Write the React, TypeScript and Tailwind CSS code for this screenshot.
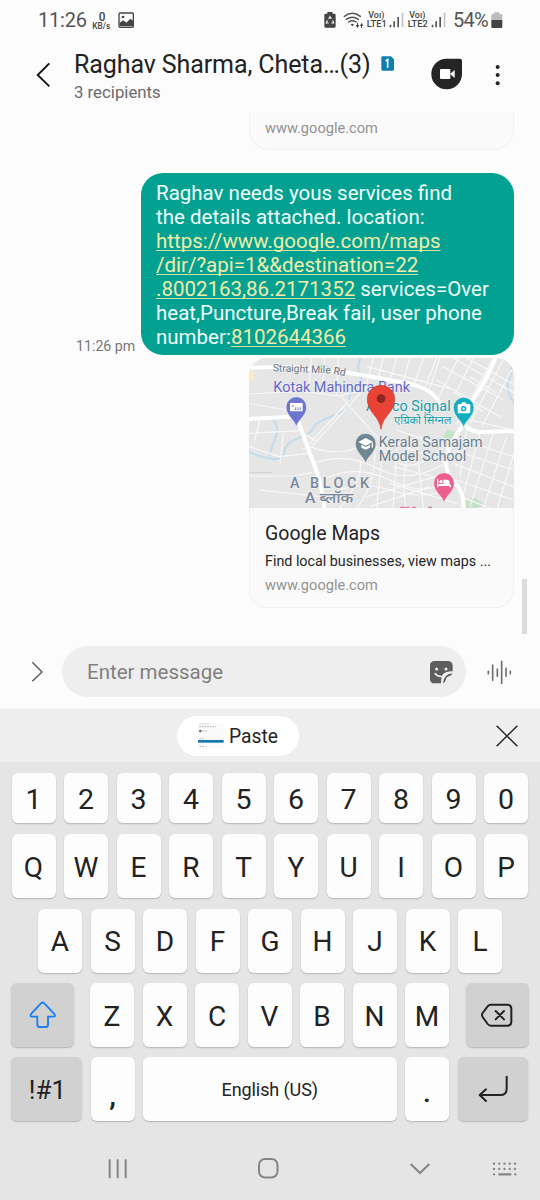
import React from "react";

function BatterySaverIcon() {
  return (
    <svg className="h-4 w-3 shrink-0" viewBox="161 34 36 48">
      <path d="M171 34h16v5h5q4 0 4 4v34q0 4-4 4h-26q-4 0-4-4V43q0-4 4-4h5z" fill="#444" />
      <path d="M175 55l4-7 4 7M187 59l3 8h-7M175 67h-7l3-8" fill="none" stroke="#fcfcfc" strokeWidth="3.4" />
    </svg>
  );
}

function WifiIcon() {
  return (
    <svg className="h-[17px] w-[21px] shrink-0" viewBox="219 32 63 51">
      <g fill="none" stroke="#555" strokeWidth="4.500" strokeLinecap="round">
        <path d="M223 45q24-18 48 0M229 54q18-13 36 0M236 62q11-8 22 0" />
      </g>
      <path d="M242 69q5-4 10 0l-5 6zM257 71h4v-6h3v6h4l-5.500 9zM270 73h3v7h3v-7h4l-5.500-9z" fill="#444" />
    </svg>
  );
}

function Lte({ n }: { n: string }) {
  return (
    <svg className="h-[18px] w-[21px] shrink-0" viewBox="289 32 63 54">
      <g fill="#444" fontFamily="Roboto" fontWeight="500">
        <text x="296" y="53" fontSize="27" textLength="48" lengthAdjust="spacingAndGlyphs">Voı)</text>
        <text x="291" y="81" fontSize="28" textLength="60" lengthAdjust="spacingAndGlyphs">{"LTE" + n}</text>
      </g>
    </svg>
  );
}

function Signal() {
  return (
    <svg className="h-4 w-[15px] shrink-0" viewBox="359 35 45 48">
      <path d="M361 73h5v8h-5zM372 63h5v18h-5zM384 50h5v31h-5z" fill="#555" />
      <path d="M397 37h5v44h-5z" fill="#c4c4c4" />
    </svg>
  );
}

function StatusBar() {
  return (
    <div className="flex h-10 items-center">
      <span className="ml-[38px] w-[51px] whitespace-nowrap text-[20px] leading-6 tracking-[-0.200px] text-[#555]">11:26</span>
      <svg className="ml-[3px] h-[21px] w-5 shrink-0" viewBox="277 30 60 63">
        <g fill="#444" fontFamily="Roboto" fontWeight="500">
          <text x="297" y="62" fontSize="38" textLength="20" lengthAdjust="spacingAndGlyphs">0</text>
          <text x="278" y="87" fontSize="25" textLength="54" lengthAdjust="spacingAndGlyphs">KB/s</text>
        </g>
      </svg>
      <svg className="ml-[6px] h-4 w-4 shrink-0" viewBox="353 35 48 48">
        <rect x="356" y="38" width="43" height="43" rx="3" fill="#fcfcfc" stroke="#444" strokeWidth="4" />
        <path d="M358 67l11-7 9 7 12-12 9 7v16H358z" fill="#444" />
        <circle cx="368" cy="50" r="4" fill="#444" />
      </svg>
      <div className="ml-[190px] flex items-center">
        <BatterySaverIcon />
        <div className="w-[7px]" />
        <WifiIcon />
        <div className="w-[2px]" />
        <Lte n="1" />
        <div className="w-[2px]" />
        <Signal />
        <div className="w-[3px]" />
        <Lte n="2" />
        <div className="w-[3px]" />
        <Signal />
      </div>
      <span className="ml-[7px] w-[38px] whitespace-nowrap text-[20px] leading-6 tracking-[-0.700px] text-[#555]">54%</span>
      <svg className="h-[17px] w-3 shrink-0" viewBox="663 33 36 51">
        <path d="M672 34h16v5h6q3 0 3 3v15h-33V42q0-3 3-3h5z" fill="#bdbdbd" />
        <path d="M664 57h33v21q0 3-3 3h-27q-3 0-3-3z" fill="#444" />
      </svg>
    </div>
  );
}

function Header() {
  return (
    <div className="flex h-[72px] items-start">
      <svg className="ml-[36px] mt-[21px] h-[28px] w-4 shrink-0" viewBox="108 183 48 84">
        <path d="M148 190L113 225l35 34" fill="none" stroke="#111" strokeWidth="5.500" />
      </svg>
      <div className="ml-[22px] mt-[10px] w-[300px]">
        <div className="whitespace-nowrap text-[25px] leading-[30px] tracking-[-0.100px] text-[#222]">Raghav Sharma, Cheta…(3)</div>
        <div className="mt-[2px] whitespace-nowrap text-[16.800px] leading-5 text-[#6b6b6b]">3 recipients</div>
      </div>
      <svg className="ml-[7px] mt-4 h-[15px] w-[13px] shrink-0" viewBox="333 168 39 45">
        <path d="M338 169h25l9 9v30q0 4-4 4h-30q-4 0-4-4v-35q0-4 4-4z" fill="#0d7fae" />
        <path d="M347 183l6-4v24" fill="none" stroke="#fff" strokeWidth="5" />
      </svg>
      <svg className="ml-[37px] mt-[18px] h-8 w-8 shrink-0" viewBox="484 175 96 96">
        <path d="M531 177h40q6 0 6 6v41a46 46 0 1 1-46-47z" fill="#252525" />
        <rect x="511" y="208" width="31" height="30" rx="3" fill="#fff" />
        <path d="M541 223l14-12v24z" fill="#fff" />
      </svg>
      <svg className="ml-[29px] mt-[23px] h-6 w-3 shrink-0" viewBox="666 188 36 72">
        <circle cx="683" cy="200" r="6" fill="#222" />
        <circle cx="683" cy="224" r="6" fill="#222" />
        <circle cx="683" cy="249" r="6" fill="#222" />
      </svg>
    </div>
  );
}

function Pin({ x, y, color, children }: { x: number; y: number; color: string; children: React.ReactNode }) {
  return (
    <g transform={`translate(${x} ${y})`}>
      <path d="M0 60C-5 38-31 27-31 0a31 31 0 0 1 62 0C31 27 5 38 0 60z" fill={color} stroke="#f5f5f5" strokeWidth="2" />
      {children}
    </g>
  );
}

function MapPicture() {
  return (
    <svg className="h-[150px] w-full" viewBox="27 24 795 450" preserveAspectRatio="none">
      <rect x="27" y="24" width="795" height="450" fill="#e6e6e6" />
      <path d="M610 262l12-24 22 8 8 26zM672 448l34-4 30 22-30 8h-34z" fill="#c3e3c6" />
      <path d="M27 66h14v26H27z" fill="#f6ecc0" />
      <g fill="none" stroke="#c6dbe9" strokeWidth="6">
        <path d="M362 24q-14 30-2 52 12 18-12 36t-20 42-50 44-58 36-44 30-44 44-60 14-45-22" />
        <path d="M100 208q18 26 8 50t-20 62M808 24q14 36 0 62t8 64 6 40" />
      </g>
      <g fill="none" stroke="#f8f8f8" strokeWidth="3.500">
        <path d="M27 132l160-8 110 14 90-22M215 24l-8 80M255 24l-10 108M295 24l-5 110M27 160l110 20M400 24l-24 90 90 30M430 24l-16 60M470 24l-20 70M510 24l-24 80M550 24l-30 86M590 24l-32 80M380 50l250 66M390 76l150 34M360 130L215 290M330 150L190 300M300 136l160 180M27 250l150-8 50 30M27 290l90 30 90-10M60 210l-16 60M130 250l-10 90" />
        <path d="M610 50l180 100M590 90l190 110M640 24l182 104M680 24l142 80M600 24l-30 90M655 24l-60 120M700 24l-50 100M790 30l-100 190M815 60l-90 170M760 24l-110 200M690 80l80 50M640 125l90 60M690 210l132 30" />
        <path d="M208 290q80 30 140 4t110 30 150-30M220 340q100-36 190 14t200-10M250 390q90-50 200 0t150 10M270 430q90-40 180-10t170 0M300 474q70-90 60-140M350 474q60-70 54-190M410 474l20-200M460 474l10-180M500 474q-20-60 10-200M550 474l-20-190M470 240l150 50M470 280l150 60M460 350l160 40M450 400l200 60M380 440l240-70M390 470l180-60" />
        <path d="M640 260l180 60M640 300l180 60M640 340l180 70M650 390l170 60M660 440l90 34M680 240l-20 140M720 250l-60 220M760 250l-70 220M800 260l-70 214M822 310l-50 164" />
        <path d="M27 378h130l60-10M60 420l180 20" />
      </g>
      <path d="M27 368h70" stroke="#d2d2d2" strokeWidth="3" />
      <g fill="none" stroke="#fff" strokeWidth="12">
        <path d="M27 54q140-10 280 12t220 40q70 20 80 80M27 207l142-8 70 190 15 85M767 24q-30 70-58 110t-36 84q12 30 60 28t89-2M671 222q-36 50-50 90t20 80 30 82" />
      </g>
      <g fontFamily="Roboto, 'Noto Sans', sans-serif" strokeLinejoin="round" paintOrder="stroke" stroke="#f0f0f0" strokeWidth="4">
        <text x="98" y="64" fontSize="31" fill="#6e7882" textLength="174" lengthAdjust="spacingAndGlyphs" transform="rotate(2 98 64)">Straight Mile</text>
        <text x="279" y="72" fontSize="31" fill="#6e7882" textLength="37" lengthAdjust="spacingAndGlyphs" transform="rotate(10 279 72)">Rd</text>
        <text x="100" y="126" fontSize="43" fill="#6669c8" textLength="410" lengthAdjust="spacingAndGlyphs">Kotak Mahindra Bank</text>
        <text x="378" y="184" fontSize="43" fill="#169dab" textLength="254" lengthAdjust="spacingAndGlyphs">Agrico Signal</text>
        <text x="462" y="221" fontSize="31" fill="#169dab" textLength="172" lengthAdjust="spacingAndGlyphs">एग्रिको सिग्नल</text>
        <text x="416" y="290" fontSize="43" fill="#69808f" textLength="312" lengthAdjust="spacingAndGlyphs">Kerala Samajam</text>
        <text x="416" y="334" fontSize="43" fill="#69808f" textLength="263" lengthAdjust="spacingAndGlyphs">Model School</text>
        <text x="150" y="414" fontSize="43" fontWeight="500" fill="#7b869d">A</text>
        <text x="210" y="414" fontSize="43" fontWeight="500" fill="#7b869d" textLength="177">BLOCK</text>
        <text x="194" y="460" fontSize="44" fontWeight="500" fill="#7b869d" textLength="146" lengthAdjust="spacingAndGlyphs">A ब्लॉक</text>
      </g>
      <path d="M480 472h28M516 472h12M564 472h12" stroke="#e77ba7" strokeWidth="4" />
      <Pin x={169} y={171} color="#6d75cf">
        <rect x="-19" y="-12" width="38" height="25" rx="2" fill="#fff" />
        <path d="M-14-3h7M-5 3H0M3 3h4M10 3h4M-5 7H0M3 7h4M10 7h4" stroke="#6d75cf" strokeWidth="3" />
      </Pin>
      <Pin x={671} y={173} color="#14acc0">
        <path d="M-14-11h6l4-5H5l4 5h7q4 0 4 4v20q0 4-4 4h-30q-4 0-4-4V-7q0-4 4-4z" fill="#fff" />
        <circle cy="3" r="8" fill="#14acc0" />
        <circle cy="3" r="3.500" fill="#fff" />
      </Pin>
      <Pin x={377} y={281} color="#708692">
        <path d="M0-17l22 11L0 6l-22-11zM-13 3L0 10 13 3v9L0 18l-13-6zM18-3h4V12h-4z" fill="#fff" />
      </Pin>
      <Pin x={612} y={399} color="#ed5e91">
        <path d="M-21-13h4V5h34v-7q0-8-8-8H-2V3h-13v2h36v8h-4V9h-34v4h-4z" fill="#fff" />
        <circle cx="-9" cy="-4" r="5" fill="#fff" />
      </Pin>
      <path d="M423 238c-5-42-41-50-41-91a41 41 0 0 1 82 0c0 41-36 49-41 91z" fill="#e94335" stroke="#cc3a2f" strokeWidth="2" />
      <circle cx="423" cy="146" r="13" fill="#8f251f" />
    </svg>
  );
}

function Link({ children }: { children: React.ReactNode }) {
  return (
    <span className="text-[#f2edaa] underline decoration-[#d3dc9c] decoration-1 underline-offset-2 [text-decoration-skip-ink:none]">
      {children}
    </span>
  );
}

function Messages() {
  return (
    <div className="relative flex h-[522px] flex-col items-end overflow-hidden pr-[26px]">
      <div className="flex h-[38px] w-[265px] shrink-0 rounded-b-[20px] border border-t-0 border-[#f1f1f1] bg-[#fafafa] pl-[15px] pt-[6px]">
        <span className="whitespace-nowrap text-[14.600px] leading-5 text-[#929292]">www.google.com</span>
      </div>
      <div className="mt-[23px] flex items-end">
        <span className="mb-px mr-[5px] w-[60px] whitespace-nowrap text-[14.200px] leading-4 text-[#777]">11:26 pm</span>
        <div className="h-[182px] w-[373px] whitespace-nowrap rounded-[22px] bg-[#03a191] pl-[15px] pt-2 text-[20.500px] leading-6 text-[#f0fffb]">
          <div>Raghav needs yous services find</div>
          <div>the details attached. location:</div>
          <div><Link>https://www.google.com/maps</Link></div>
          <div><Link>/dir/?api=1&amp;&amp;destination=22</Link></div>
          <div><Link>.8002163,86.2171352</Link> services=Over</div>
          <div>heat,Puncture,Break fail, user phone</div>
          <div>number:<Link>8102644366</Link></div>
        </div>
      </div>
      <div className="mt-[3px] flex h-[250px] w-[265px] shrink-0 flex-col overflow-hidden rounded-[18px] bg-[#fafafa] shadow-[inset_0_0_0_1px_#f1f1f1]">
        <MapPicture />
        <div className="flex flex-col whitespace-nowrap pl-4">
          <span className="mt-[14px] text-[19.500px] leading-6 text-[#252525]">Google Maps</span>
          <span className="mt-[5px] text-[14.300px] leading-5 text-[#252525]">Find local businesses, view maps ...</span>
          <span className="mt-[4px] text-[14.600px] leading-5 text-[#929292]">www.google.com</span>
        </div>
      </div>
      <div className="absolute right-[13px] top-[467px] h-[55px] w-[5px] bg-[#dcdcdc]" />
    </div>
  );
}

function Composer() {
  return (
    <div className="flex h-[75px] items-start pt-[12px]">
      <svg className="ml-[30px] mt-[14px] h-6 w-[14px] shrink-0" viewBox="90 90 42 72">
        <path d="M97 97l29 29-29 28" fill="none" stroke="#5f5f5f" strokeWidth="4.500" />
      </svg>
      <div className="ml-[18px] flex h-[51px] w-[404px] items-center justify-between rounded-full bg-[#eee] pl-[25px] pr-3">
        <span className="whitespace-nowrap pt-px text-[20.500px] leading-6 text-[#808080]">Enter message</span>
        <svg className="h-6 w-[25px]" viewBox="387 88 75 72">
          <path d="M404 91h39q15 0 15 15v16q-25 1-30 10-5 8-5 26h-19q-14 0-14-14v-39q0-14 14-14z" fill="#5e5e5e" />
          <path d="M429 158q1-26 28-30-1 7-8 8-10 2-12 12-1 8-8 10z" fill="#5e5e5e" />
          <circle cx="410" cy="115" r="4.500" fill="#eee" />
          <circle cx="438" cy="115" r="4.500" fill="#eee" />
          <path d="M404 128q10 12 25 9" fill="none" stroke="#eee" strokeWidth="5" />
        </svg>
      </div>
      <svg className="ml-[20px] mt-[14px] h-6 w-[27px] shrink-0" viewBox="557 88 81 72">
        <path d="M564 122v7M577 103v46M591 115v22M604 92v66M617 113v24M630 122v7" stroke="#707070" strokeWidth="5" strokeLinecap="round" />
      </svg>
    </div>
  );
}

function ClipboardBar() {
  return (
    <div className="flex h-[53px] items-center bg-[#eee]">
      <div className="ml-[177px] flex h-10 w-[122px] items-center rounded-full bg-white pl-5">
        <svg className="h-[26px] w-7 shrink-0" viewBox="591 276 84 78">
          <rect x="594" y="276" width="78" height="78" fill="#fafafa" />
          <path d="M597 279h30" stroke="#ddd" strokeWidth="3" />
          <path d="M598 287h50M608 300h16M598 323h16M599 346h20" stroke="#b5b5b5" strokeWidth="3" strokeDasharray="5 3" />
          <circle cx="601" cy="300" r="4" fill="#666" />
          <path d="M594 331h77" stroke="#1279ad" strokeWidth="8" />
        </svg>
        <span className="ml-[4px] pt-[2px] text-[19.300px] leading-6 text-[#252525]">Paste</span>
      </div>
      <svg className="ml-[196px] h-6 w-6" viewBox="586 281 72 72">
        <path d="M591 286l62 62M653 286l-62 62" stroke="#252525" strokeWidth="4.500" />
      </svg>
    </div>
  );
}

const keyBase = "flex shrink-0 items-center justify-center rounded-[6px] shadow-[0_1px_1.500px_rgba(0,0,0,0.22)] text-[#222]";

function Key({ label }: { label: string }) {
  return <div className={keyBase + " h-16 w-11 bg-[#fdfdfd] pt-[3px] text-[28px] leading-8"}>{label}</div>;
}

function Keyboard() {
  return (
    <div className="flex h-[374px] flex-col bg-[#e5e5e5] pt-[11px]">
      <div className="flex gap-[8.500px] pl-[11.500px]">
        {"1234567890".split("").map((c) => (
          <div key={c} className={keyBase + " h-[50px] w-11 bg-[#fdfdfd] pt-[4px] text-[28.500px] leading-8"}>{c}</div>
        ))}
      </div>
      <div className="mt-[11px] flex gap-[8.500px] pl-[11.500px]">
        {"QWERTYUIOP".split("").map((c) => <Key key={c} label={c} />)}
      </div>
      <div className="mt-[10.500px] flex gap-[8.500px] pl-[38px]">
        {"ASDFGHJKL".split("").map((c) => <Key key={c} label={c} />)}
      </div>
      <div className="mt-[10.500px] flex gap-[8.500px] pl-[11px]">
        <div className={keyBase + " mr-[7.500px] h-16 w-[63px] bg-[#d1d1d1]"}>
          <svg className="h-7 w-7" viewBox="87 92 84 84">
            <path d="M123 99q5-5 10 0l29 31q7 9-3 9h-15v24q0 7-7 7h-18q-7 0-7-7v-24H97q-9 0-3-9z" fill="none" stroke="#1a7ff0" strokeWidth="5.500" />
          </svg>
        </div>
        {"ZXCVBNM".split("").map((c) => <Key key={c} label={c} />)}
        <div className={keyBase + " ml-[8px] h-16 w-[63px] bg-[#d1d1d1]"}>
          <svg className="h-[26px] w-8" viewBox="634 94 96 78">
            <path d="M663 102h50q12 0 12 12v39q0 12-12 12h-50q-5 0-9-5l-15-21q-4-6 0-12l15-20q4-5 9-5z" fill="none" stroke="#222" strokeWidth="6" />
            <path d="M678 121l25 25M703 121l-25 25" stroke="#222" strokeWidth="6" strokeLinecap="round" />
          </svg>
        </div>
      </div>
      <div className="mt-[10px] flex gap-[8.500px] pl-[11px]">
        <div className={keyBase + " h-16 w-[71px] bg-[#d1d1d1] pl-[2px] pt-px text-[26px] leading-8"}>!#1</div>
        <div className={keyBase + " h-16 w-11 bg-[#fdfdfd] pt-[11px] text-[30px] font-medium leading-8"}>,</div>
        <div className={keyBase + " h-16 w-[253.500px] bg-[#fdfdfd] pt-[2px] text-[18px] leading-6 tracking-[-0.100px]"}>English (US)</div>
        <div className={keyBase + " h-16 w-11 bg-[#fdfdfd] pt-[8px] text-[28px] font-medium leading-8"}>.</div>
        <div className={keyBase + " h-16 w-[70.500px] bg-[#d1d1d1]"}>
          <svg className="h-[28px] w-8" viewBox="621 315 96 84">
            <path d="M710 320v36q0 19-19 19h-61M648 358l-19 17 19 18" fill="none" stroke="#222" strokeWidth="6" strokeLinecap="round" strokeLinejoin="round" />
          </svg>
        </div>
      </div>
    </div>
  );
}

function NavBar() {
  return (
    <div className="flex h-16 items-center bg-[#e5e5e5] pt-px">
      <svg className="ml-[107px] h-6 w-6" viewBox="320 560 72 72">
        <path d="M328 567v57M352 567v57M376 567v57" stroke="#858585" strokeWidth="6" />
      </svg>
      <svg className="ml-[126px] h-6 w-6" viewBox="0 0 24 24">
        <rect x="2" y="2" width="18.500" height="18.500" rx="6" fill="none" stroke="#858585" strokeWidth="2" />
      </svg>
      <svg className="ml-[128px] h-6 w-6" viewBox="417 560 72 72">
        <path d="M422 581l28 27 28-27" fill="none" stroke="#858585" strokeWidth="6" />
      </svg>
      <svg className="ml-[58px] h-6 w-7" viewBox="663 561 84 72">
        <path d="M672 581h68M672 597h68" stroke="#858585" strokeWidth="7" strokeDasharray="0 15.700" strokeLinecap="round" />
        <path d="M672 613h0.100M736 613h0.100M688 613h33" stroke="#858585" strokeWidth="7" strokeLinecap="round" />
      </svg>
    </div>
  );
}

export default function App() {
  return (
    <div className="flex h-[1200px] w-[540px] flex-col overflow-hidden bg-[#fcfcfc] font-[Roboto,sans-serif]">
      <StatusBar />
      <Header />
      <Messages />
      <Composer />
      <ClipboardBar />
      <Keyboard />
      <NavBar />
    </div>
  );
}
